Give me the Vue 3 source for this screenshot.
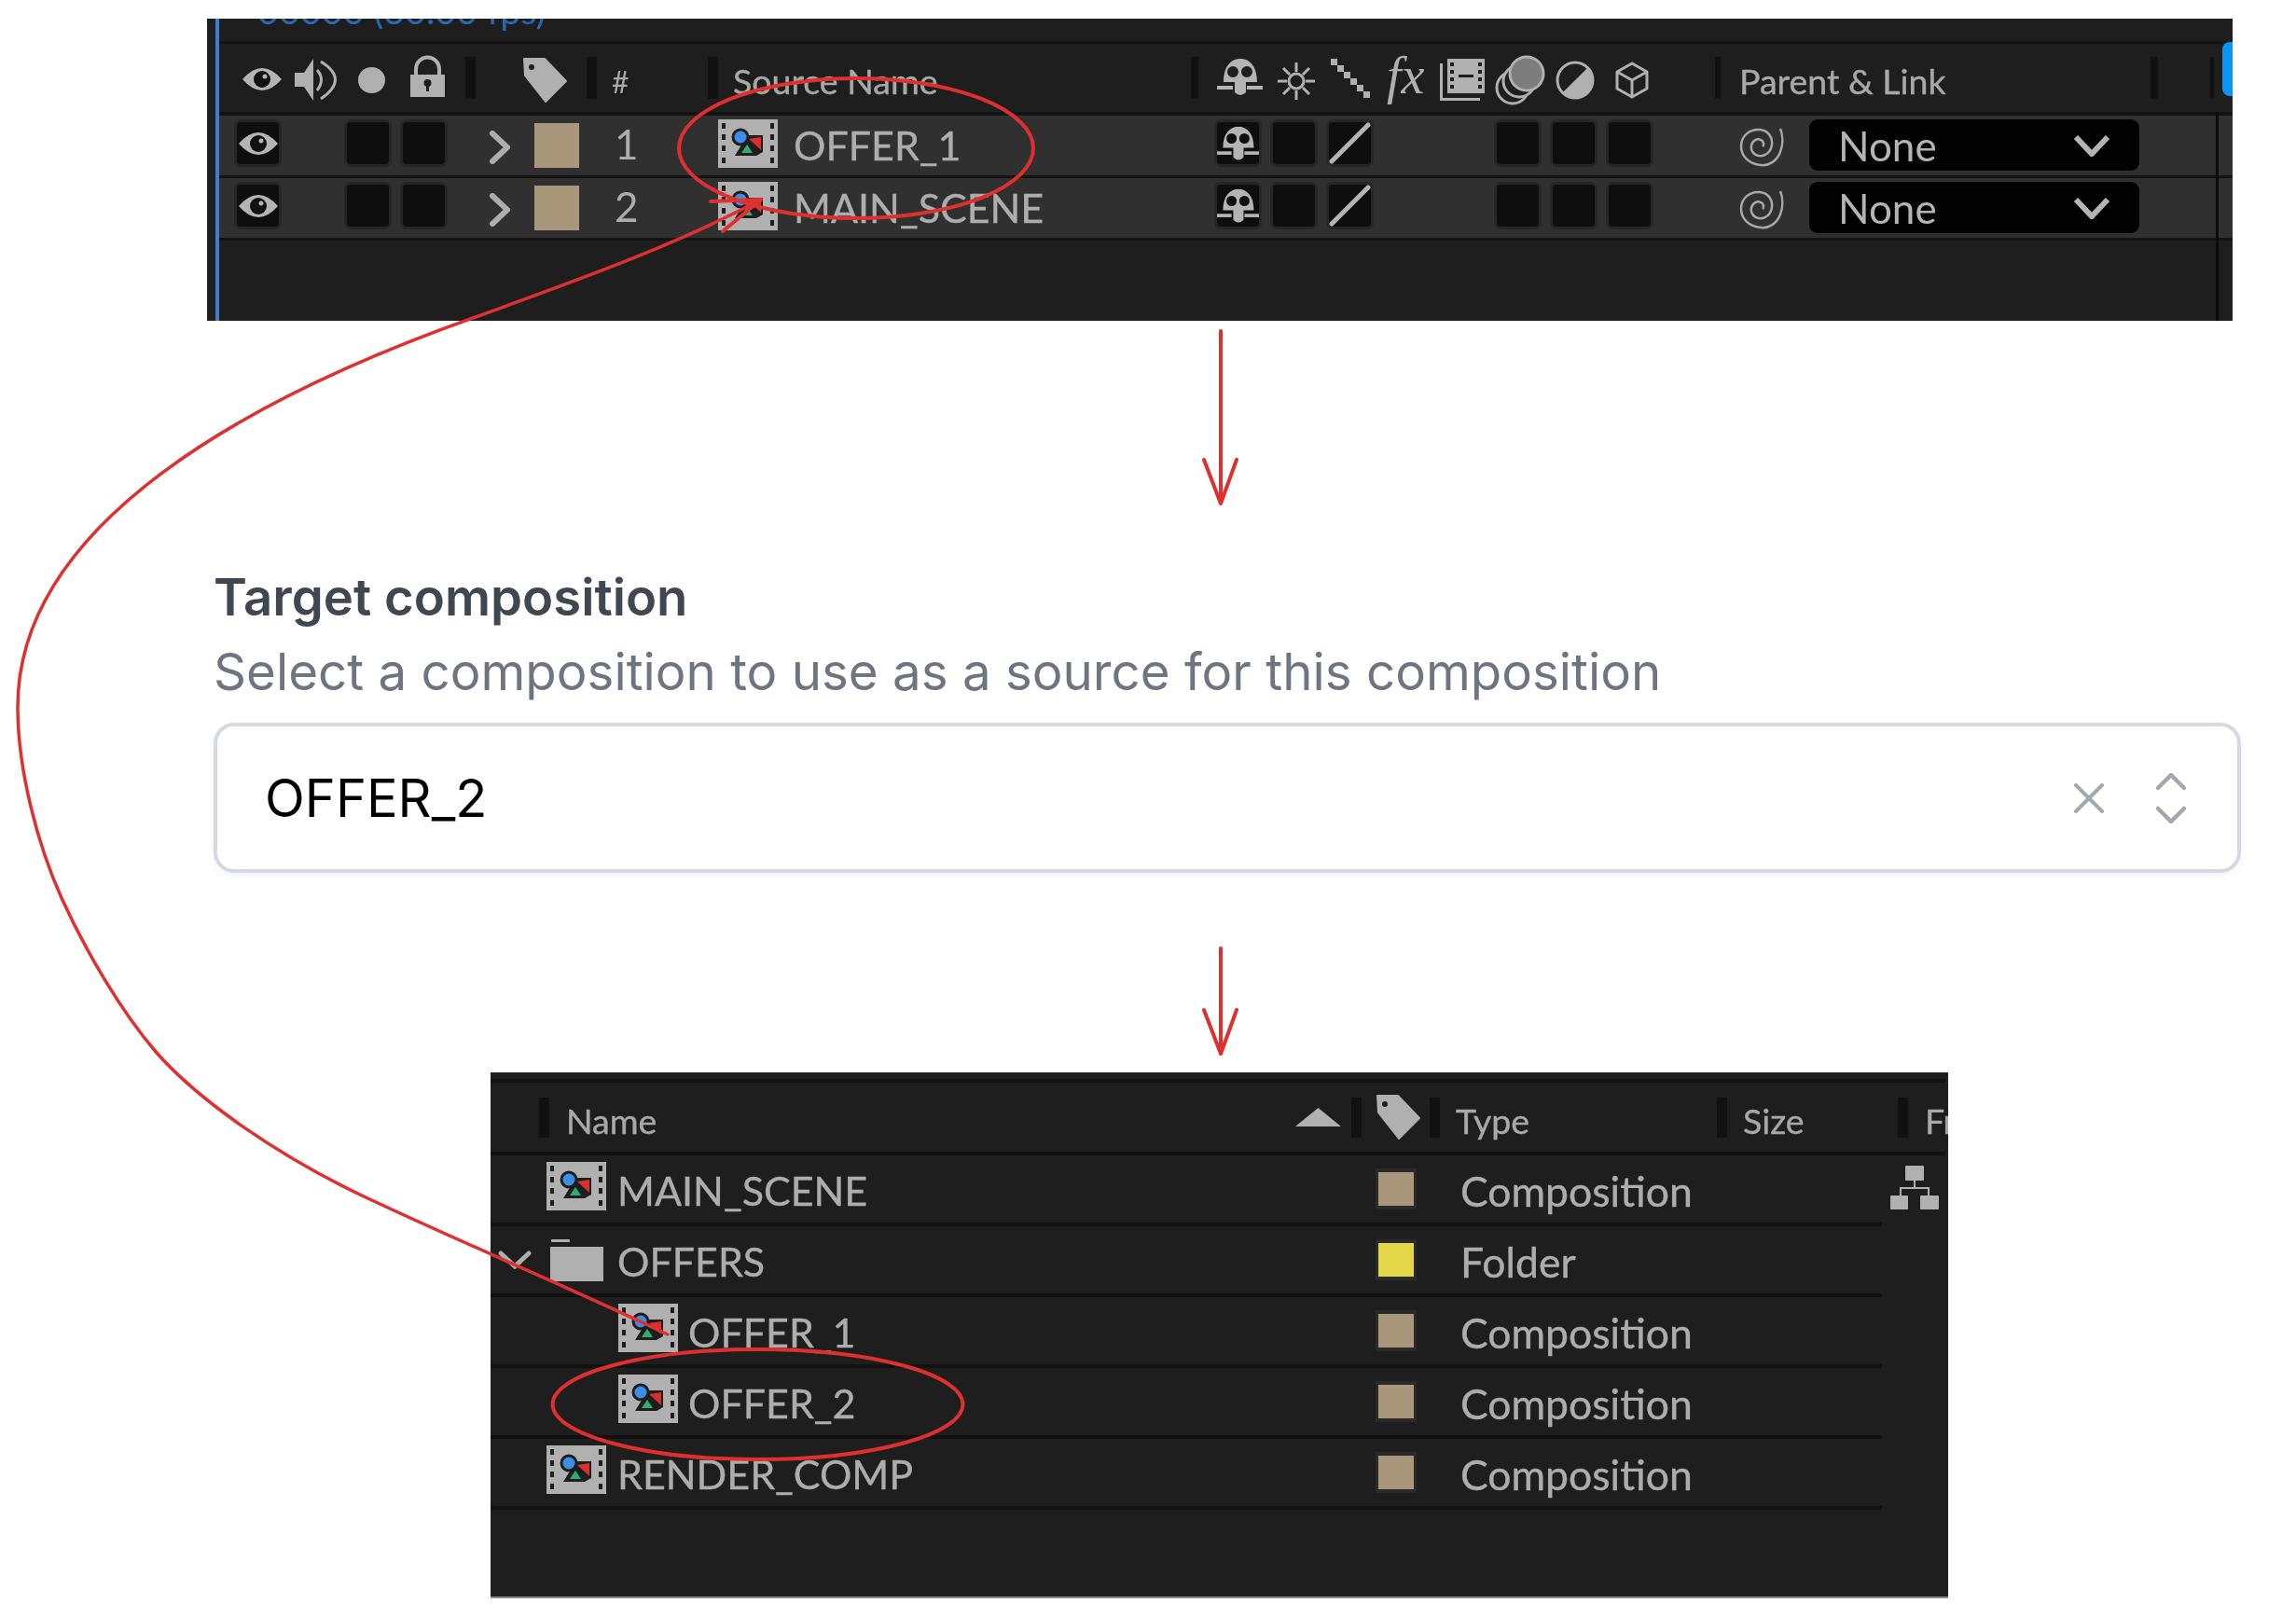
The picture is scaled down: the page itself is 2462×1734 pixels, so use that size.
<script setup>
const layers = [
  { num: 1, name: "OFFER_1" },
  { num: 2, name: "MAIN_SCENE" },
];

const project = [
  { name: "MAIN_SCENE", type: "Composition", kind: "comp", color: "#a8977a" },
  { name: "OFFERS", type: "Folder", kind: "folder", color: "#e4d84a" },
  { name: "OFFER_1", type: "Composition", kind: "comp", color: "#a8977a", child: true },
  { name: "OFFER_2", type: "Composition", kind: "comp", color: "#a8977a", child: true },
  { name: "RENDER_COMP", type: "Composition", kind: "comp", color: "#a8977a" },
];
</script>

<template>
  <div class="page">
    <!-- shared icons -->
    <svg class="defs" width="0" height="0">
      <symbol id="comp" viewBox="0 0 64 52">
        <rect width="64" height="52" fill="#b0b0b0" />
        <g fill="#1e1e1e">
          <rect x="4" y="4" width="4" height="6" />
          <rect x="4" y="16" width="4" height="6" />
          <rect x="4" y="28" width="4" height="6" />
          <rect x="4" y="41" width="4" height="6" />
          <rect x="56" y="4" width="4" height="6" />
          <rect x="56" y="16" width="4" height="6" />
          <rect x="56" y="28" width="4" height="6" />
          <rect x="56" y="41" width="4" height="6" />
          <polygon points="30,17 48,17 48,35 41,39 18,39 26,26" />
        </g>
        <circle cx="24" cy="19" r="8" fill="#3b8fe8" stroke="#1e1e1e" stroke-width="3" />
        <polygon points="33,21 46,19 46,33" fill="#d8312c" />
        <polygon points="31,27 25,36 37,36" fill="#2fae6e" />
      </symbol>
      <symbol id="eye" viewBox="0 0 44 26">
        <path d="M1 13 Q22 -11 43 13 Q22 37 1 13Z" fill="#b4b4b4" />
        <circle cx="22" cy="13" r="9" fill="#111" />
        <circle cx="25" cy="10" r="2.5" fill="#b4b4b4" />
      </symbol>
      <symbol id="mask" viewBox="0 0 49 40">
        <path fill="#b4b4b4" fill-rule="evenodd"
          d="M7 25 C7 8 15 0 25 0 C35 0 43 8 43 25 L31 25 L31 36 Q25 42 19 36 L19 25 Z M11 14 a6 6 0 1 0 12 0 a6 6 0 1 0 -12 0 Z M26 14 a6 6 0 1 0 12 0 a6 6 0 1 0 -12 0 Z" />
        <rect x="0" y="29" width="17" height="4" fill="#b4b4b4" />
        <rect x="32" y="29" width="17" height="4" fill="#b4b4b4" />
      </symbol>
      <symbol id="tag" viewBox="0 0 49 50">
        <path fill="#b0b0b0" fill-rule="evenodd" stroke="#b0b0b0" stroke-width="2" stroke-linejoin="round"
          d="M2 2 L24 2 L47 26 L25 48 L3 20 Z M6 11 a4 4 0 1 0 8 0 a4 4 0 1 0 -8 0 Z" />
      </symbol>
    </svg>

    <!-- timeline panel -->
    <section class="timeline">
      <div class="gutter"></div>
      <div class="tl-main">
        <div class="timecode"><span>00000 (30.00 fps)</span></div>
        <div class="tl-head">
          <svg class="head-a" width="218" height="60" viewBox="0 0 218 60">
            <use href="#eye" x="0" y="17" width="44" height="26" />
            <polygon points="57,23 67,23 77,8 77,53 67,38 57,38" fill="#b0b0b0" />
            <path d="M81 20 Q90 30 81 42 M85 11 Q116 30 85 51" fill="none" stroke="#b0b0b0" stroke-width="3" />
            <ellipse cx="139.5" cy="31" rx="14.5" ry="14" fill="#b0b0b0" />
            <rect x="181" y="25" width="37" height="24" fill="#b0b0b0" />
            <path d="M187 26 V19 a12.5 12.5 0 0 1 25 0 V26" fill="none" stroke="#b0b0b0" stroke-width="4" />
            <circle cx="199.5" cy="34" r="4" fill="#1e1e1e" />
            <rect x="198" y="34" width="3" height="9" fill="#1e1e1e" />
          </svg>
          <i class="sep s1"></i>
          <svg class="h-tag" width="49" height="50"><use href="#tag" width="49" height="50" /></svg>
          <i class="sep s2"></i>
          <span class="hash">#</span>
          <i class="sep s3"></i>
          <span class="head-label src">Source Name</span>
          <i class="sep s4"></i>
          <svg class="head-b" width="463" height="60" viewBox="0 0 463 60">
            <use href="#mask" x="0" y="8" width="49" height="40" />
            <g stroke="#b0b0b0" stroke-width="3" fill="none">
              <circle cx="85" cy="32" r="8" />
              <path d="M85 12 V22 M85 42 V52 M65 32 H75 M95 32 H105 M71 18 L78 25 M92 39 L99 46 M99 18 L92 25 M78 39 L71 46" />
            </g>
            <g fill="#b0b0b0">
              <rect x="122" y="8" width="7" height="7" />
              <rect x="129" y="15" width="7" height="7" />
              <rect x="136" y="22" width="7" height="7" />
              <rect x="143" y="29" width="7" height="7" />
              <rect x="150" y="36" width="7" height="7" />
              <rect x="157" y="43" width="7" height="7" />
            </g>
            <text class="fx" x="182" y="45">fx</text>
            <rect x="247" y="8" width="40" height="37" fill="#b0b0b0" />
            <g fill="#1e1e1e">
              <rect x="250" y="12" width="4" height="4" />
              <rect x="250" y="20" width="4" height="4" />
              <rect x="250" y="28" width="4" height="4" />
              <rect x="250" y="36" width="4" height="4" />
              <rect x="280" y="12" width="4" height="4" />
              <rect x="280" y="20" width="4" height="4" />
              <rect x="280" y="28" width="4" height="4" />
              <rect x="280" y="36" width="4" height="4" />
              <rect x="259" y="25" width="16" height="3" />
            </g>
            <path d="M240.5 13 V51.5 H282" fill="none" stroke="#b0b0b0" stroke-width="3" />
            <g stroke="#b0b0b0" stroke-width="3">
              <circle cx="317" cy="39" r="17" fill="#1e1e1e" />
              <circle cx="324" cy="32" r="17" fill="#1e1e1e" />
              <circle cx="332" cy="24" r="18" fill="#7d7d7d" />
            </g>
            <circle cx="384" cy="31" r="19" fill="none" stroke="#b0b0b0" stroke-width="3" />
            <path d="M398.1 16.9 A20 20 0 0 1 369.9 45.1 Z" fill="#b0b0b0" />
            <path d="M445 13 L461 22 V40 L445 49 L429 40 V22 Z M429 22 L445 31 L461 22 M445 31 V49" fill="none" stroke="#b0b0b0" stroke-width="3" stroke-linejoin="round" />
          </svg>
          <i class="sep s5"></i>
          <span class="head-label parent">Parent &amp; Link</span>
          <i class="sep s6"></i>
          <i class="sep s7"></i>
          <b class="blue-tab"></b>
        </div>
        <div v-for="l in layers" :key="l.num" class="layer">
          <div class="box first"><svg width="44" height="26"><use href="#eye" width="44" height="26" /></svg></div>
          <div class="box b-audio"></div>
          <div class="box"></div>
          <svg class="twirl" width="22" height="36" viewBox="0 0 22 36">
            <polyline points="3,3 19,18 3,33" fill="none" stroke="#adadad" stroke-width="6" stroke-linecap="round" />
          </svg>
          <div class="swatch"></div>
          <span class="num">{{ l.num }}</span>
          <svg class="comp" width="64" height="52"><use href="#comp" width="64" height="52" /></svg>
          <span class="layer-name">{{ l.name }}</span>
          <div class="box"><svg width="47" height="38" viewBox="0 0 49 40"><use href="#mask" width="49" height="40" /></svg></div>
          <div class="box"></div>
          <div class="box">
            <svg width="45" height="45" viewBox="0 0 45 45">
              <line x1="3" y1="42" x2="42" y2="3" stroke="#b4b4b4" stroke-width="5" stroke-linecap="round" />
            </svg>
          </div>
          <div class="box b-switch"></div>
          <div class="box"></div>
          <div class="box"></div>
          <svg class="spiral" width="48" height="44" viewBox="0 0 48 44">
            <path d="M44 3 C47 10 47 20 44 28 C40 38 32 43 23 42 C10 41 2 32 2 22 C2 10 12 3 22 4 C31 5 36 12 35 20 C34 28 28 33 21 32 C15 31 12 26 13 21 C14 16 19 13 23 15 C26 16 27 20 25 22" fill="none" stroke="#a8a8a8" stroke-width="2.5" />
          </svg>
          <div class="parent-select">
            <span>None</span>
            <svg width="40" height="24" viewBox="0 0 40 24">
              <polyline points="3,3 20,21 37,3" fill="none" stroke="#b4b4b4" stroke-width="6" />
            </svg>
          </div>
        </div>
        <div class="tl-rest"></div>
      </div>
      <b class="tl-line"></b>
    </section>

    <!-- form field -->
    <section class="field">
      <h2>Target composition</h2>
      <p>Select a composition to use as a source for this composition</p>
      <div class="combo">
        <span>OFFER_2</span>
        <svg class="clear" width="32" height="32" viewBox="0 0 32 32">
          <path d="M2 2 L30 30 M30 2 L2 30" stroke="#a5a8ab" stroke-width="4" stroke-linecap="round" />
        </svg>
        <svg class="updown" width="32" height="54" viewBox="0 0 32 54">
          <path d="M2 16 L16 2 L30 16 M2 38 L16 52 L30 38" fill="none" stroke="#a5a8ab" stroke-width="4.5" stroke-linecap="round" stroke-linejoin="round" />
        </svg>
      </div>
    </section>

    <!-- project panel -->
    <section class="project">
      <div class="pj-head">
        <i class="sep p1"></i>
        <span class="head-label">Name</span>
        <svg class="sort" width="49" height="20" viewBox="0 0 49 20"><polygon points="24.5,0 49,20 0,20" fill="#b0b0b0" /></svg>
        <i class="sep p2"></i>
        <svg class="p-tag" width="49" height="50"><use href="#tag" width="49" height="50" /></svg>
        <i class="sep p3"></i>
        <span class="head-label type">Type</span>
        <i class="sep p4"></i>
        <span class="head-label size">Size</span>
        <i class="sep p5"></i>
        <span class="head-label fr">Fr</span>
      </div>
      <div class="pj-body">
        <div class="pj-list">
          <div v-for="item in project" :key="item.name" class="pj-row">
            <div class="pj-name" :class="{ child: item.child }">
              <template v-if="item.kind === 'folder'">
                <svg class="fold-arrow" width="36" height="20" viewBox="0 0 36 20">
                  <polyline points="3,3 18,17 33,3" fill="none" stroke="#adadad" stroke-width="5" stroke-linecap="round" />
                </svg>
                <svg class="folder" width="57" height="45" viewBox="0 0 57 45">
                  <rect x="1" y="0" width="20" height="3" rx="1" fill="#b0b0b0" />
                  <rect y="8" width="57" height="37" fill="#b0b0b0" />
                </svg>
              </template>
              <svg v-else class="comp" width="64" height="52"><use href="#comp" width="64" height="52" /></svg>
              <span>{{ item.name }}</span>
            </div>
            <div class="pj-swatch"><i :style="{ background: item.color }"></i></div>
            <span class="pj-type">{{ item.type }}</span>
          </div>
        </div>
        <svg class="flow" width="52" height="47" viewBox="0 0 52 47">
          <g fill="#b0b0b0">
            <rect x="16" y="0" width="20" height="16" rx="1" />
            <rect x="25" y="16" width="2" height="8" />
            <rect x="10" y="23" width="32" height="2" />
            <rect x="10" y="23" width="2" height="9" />
            <rect x="40" y="23" width="2" height="9" />
            <rect x="0" y="32" width="19" height="15" rx="1" />
            <rect x="32" y="32" width="20" height="15" rx="1" />
          </g>
        </svg>
      </div>
    </section>

    <!-- red annotations drawn over the whole picture -->
    <svg class="notes" width="2462" height="1734" viewBox="0 0 2462 1734">
      <g fill="none" stroke="#df3030" stroke-linecap="round" stroke-linejoin="round">
        <ellipse cx="918" cy="159" rx="190" ry="75" stroke-width="4" />
        <ellipse cx="812.5" cy="1506" rx="220" ry="59" stroke-width="4" />
        <path stroke-width="3.5" d="M816 214 C 720 265, 620 300, 510 340 C 270 425, 19 560, 19 758 C 19 825, 40 905, 66 963 C 92 1020, 130 1085, 168 1129 C 215 1182, 300 1240, 388 1282 C 500 1335, 610 1380, 716 1431" />
        <path stroke-width="4" d="M762 216 L816 214 L775 248" />
        <path stroke-width="4" d="M1309 355 V540 M1291 493 L1309 540 L1326 493" />
        <path stroke-width="4" d="M1309 1017 V1130 M1291 1083 L1309 1130 L1326 1083" />
      </g>
    </svg>
  </div>
</template>

<style scoped>
.page {
  position: relative;
  width: 2462px;
  height: 1734px;
  overflow: hidden;
  background: #fff;
  padding-top: 20px;
  box-sizing: border-box;
  font-family: Lato, "Liberation Sans", sans-serif;
}
.defs {
  position: absolute;
}
.notes {
  position: absolute;
  left: 0;
  top: 0;
  pointer-events: none;
}

/* timeline */
.timeline {
  position: relative;
  display: flex;
  width: 2172px;
  height: 324px;
  margin-left: 222px;
  background: #1e1e1e;
  overflow: hidden;
  filter: blur(0.5px);
}
.gutter {
  width: 9px;
  border-right: 4px solid #3b80cf;
  flex: none;
}
.tl-main {
  flex: 1;
  min-width: 0;
}
.timecode {
  height: 24px;
  border-bottom: 3px solid #141414;
  padding-left: 41px;
  overflow: hidden;
}
.timecode span {
  display: block;
  margin-top: -35px;
  color: #2a68b0;
  font-size: 39.5px;
  line-height: 52px;
  white-space: nowrap;
}
.tl-head {
  position: relative;
  display: flex;
  align-items: center;
  height: 73px;
  padding-left: 24px;
  border-bottom: 4px solid #141414;
}
.head-a,
.head-b {
  flex: none;
  align-self: flex-start;
  margin-top: 8px;
}
.sep {
  flex: none;
  display: block;
  width: 11px;
  height: 45px;
  background: #111;
}
.s1 {
  margin-left: 22px;
}
.h-tag {
  flex: none;
  margin-left: 50px;
  margin-top: 4px;
}
.s2 {
  margin-left: 20px;
}
.hash {
  width: 19px;
  margin: 8px 0 0 16px;
  color: #a8a8a8;
  font-size: 32px;
}
.s3 {
  margin-left: 84px;
}
.head-label {
  flex: none;
  margin-top: 6px;
  color: #a8a8a8;
  font-size: 37.5px;
  white-space: nowrap;
  -webkit-text-stroke: 0.4px #a8a8a8;
}
.src {
  margin-left: 16px;
  width: 273px;
}
.s4 {
  width: 8px;
  margin-left: 218px;
}
.head-b {
  margin-left: 20px;
}
.s5 {
  width: 6px;
  margin-left: 71px;
}
.parent {
  margin-left: 20px;
  width: 222px;
}
.s6 {
  width: 8px;
  margin-left: 219px;
}
.s7 {
  width: 4px;
  margin-left: 56px;
}
.blue-tab {
  position: absolute;
  right: 0;
  top: -2px;
  width: 11px;
  height: 58px;
  border-radius: 8px 0 0 8px;
  background: #0d93f2;
}
.tl-line {
  position: absolute;
  left: 2154px;
  top: 100px;
  bottom: 0;
  width: 3px;
  background: #0a0a0a;
}
.layer {
  display: flex;
  align-items: flex-start;
  height: 60px;
  padding: 4px 0 0 16px;
  background: #303030;
  border-bottom: 3px solid #141414;
  box-sizing: content-box;
}
.box {
  flex: none;
  display: flex;
  align-items: center;
  justify-content: center;
  width: 51px;
  height: 51px;
  margin-left: 9px;
  box-sizing: border-box;
  border: 3px solid #262626;
  border-radius: 7px;
  background: #0e0e0e;
}
.first {
  margin-left: 0;
}
.b-audio {
  margin-left: 67px;
}
.b-switch {
  margin-left: 129px;
}
.twirl {
  flex: none;
  margin: 12px 0 0 45px;
}
.swatch {
  flex: none;
  width: 48px;
  height: 48px;
  margin: 4px 0 0 26px;
  background: #a8977a;
}
.num {
  flex: none;
  width: 111px;
  margin-left: 38px;
  color: #adadad;
  font-size: 44px;
  line-height: 52px;
}
.comp {
  flex: none;
}
.layer-name {
  flex: none;
  width: 468px;
  box-sizing: border-box;
  padding-left: 17px;
  color: #adadad;
  font-size: 43px;
  line-height: 56px;
  white-space: nowrap;
  -webkit-text-stroke: 0.4px #adadad;
}
.layer-name + .box {
  margin-left: 0;
}
.spiral {
  flex: none;
  margin: 7px 0 0 92px;
}
.parent-select {
  flex: none;
  display: flex;
  align-items: center;
  justify-content: space-between;
  width: 354px;
  height: 55px;
  margin-left: 27px;
  padding: 0 31px 0 31px;
  box-sizing: border-box;
  border-radius: 9px;
  background: #020202;
  color: #b4b4b4;
  font-size: 44px;
}

/* form */
.field {
  width: 2174px;
  margin: 264px 0 0 229px;
}
.field h2 {
  margin: 0;
  color: #414750;
  font: 600 54.5px/64px Inter, "Liberation Sans", sans-serif;
}
.field p {
  margin: 16px 0 0;
  color: #6f7580;
  font: 400 54.65px/64px Inter, "Liberation Sans", sans-serif;
}
.combo {
  display: flex;
  align-items: center;
  height: 161px;
  margin-top: 23px;
  padding: 0 55px 0 51px;
  box-sizing: border-box;
  border: 4px solid #d6d8e3;
  border-radius: 22px;
  background: #fff;
  box-shadow: 0 3px 6px rgba(0, 0, 0, 0.05);
  color: #000;
  font: 400 56px/64px Inter, "Liberation Sans", sans-serif;
}
.combo span {
  flex: 1;
}
.clear {
  margin-right: 56px;
}

/* project */
.project {
  width: 1563px;
  height: 564px;
  margin: 214px 0 0 526px;
  padding-top: 7px;
  box-sizing: border-box;
  background: #1e1e1e;
  border-bottom: 2px solid #8a8a8a;
  overflow: hidden;
  filter: blur(0.5px);
}
.pj-head {
  display: flex;
  align-items: center;
  height: 74px;
  width: 1560px;
  border-top: 4px solid #111;
  border-bottom: 4px solid #111;
  box-sizing: content-box;
}
.p1 {
  margin-left: 52px;
}
.pj-head .head-label:first-of-type {
  width: 782px;
  margin-left: 18px;
}
.sort {
  flex: none;
}
.p2 {
  margin-left: 11px;
}
.p-tag {
  flex: none;
  margin-left: 15px;
}
.p3 {
  margin-left: 9px;
}
.type {
  width: 280px;
  margin-left: 17px;
}
.size {
  width: 166px;
  margin-left: 17px;
}
.fr {
  margin-left: 18px;
}
.pj-head .sep {
  height: 43px;
}
.pj-body {
  display: flex;
  align-items: flex-start;
}
.pj-list {
  flex: none;
  width: 1492px;
}
.flow {
  flex: none;
  margin: 11px 0 0 9px;
}
.pj-row {
  display: flex;
  align-items: center;
  height: 72px;
  border-bottom: 4px solid #111;
}
.pj-name {
  flex: none;
  display: flex;
  align-items: center;
  gap: 12px;
  width: 949px;
  padding-left: 60px;
  box-sizing: border-box;
  color: #adadad;
  font-size: 43px;
  white-space: nowrap;
  -webkit-text-stroke: 0.4px #adadad;
}
.pj-name span {
  margin-top: 3px;
}
.pj-name.child {
  padding-left: 137px;
  gap: 11px;
}
.pj-name:has(.folder) {
  padding-left: 8px;
  gap: 0;
}
.fold-arrow {
  flex: none;
  margin-right: 20px;
}
.folder {
  flex: none;
  margin-right: 15px;
}
.pj-name .comp {
  margin-top: -7px;
}
.pj-swatch {
  flex: none;
  width: 44px;
  height: 44px;
  padding: 4px 3px;
  box-sizing: border-box;
  background: #2a2a2a;
}
.pj-swatch i {
  display: block;
  height: 100%;
}
.pj-type {
  margin: 3px 0 0 47px;
  color: #adadad;
  font-size: 44.5px;
  -webkit-text-stroke: 0.4px #adadad;
}
</style>

<style>
.fx {
  fill: #b0b0b0;
  font: italic 56px "Liberation Serif", serif;
}
</style>
